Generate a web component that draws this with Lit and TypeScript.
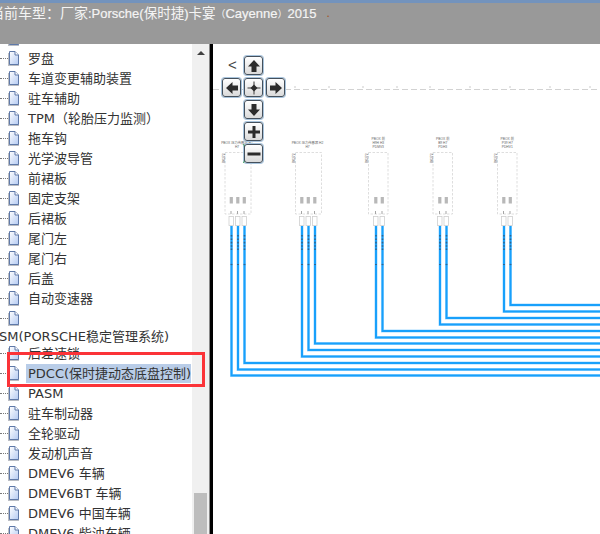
import { LitElement, html, css, svg } from "lit";
import { customElement } from "lit/decorators.js";

const tpm = html`TPM<span class="tc">（</span>轮胎压力监测<span class="tc">）</span>`;
const rowsA: unknown[] = ["", "罗盘", "车道变更辅助装置", "驻车辅助", tpm, "拖车钩", "光学波导管", "前裙板", "固定支架", "后裙板", "尾门左", "尾门右", "后盖", "自动变速器", ""];
const rowsB: unknown[] = ["后差速锁", "PDCC(保时捷动态底盘控制)", "PASM", "驻车制动器", "全轮驱动", "发动机声音", "DMEV6 车辆", "DMEV6BT 车辆", "DMEV6 中国车辆", "DMEV6 柴油车辆"];

const fileIcon = html`<svg class="file" viewBox="0 0 12 16" width="12" height="16">
  <defs><linearGradient id="pg" x1="0" y1="0" x2="1" y2="1"><stop offset="0" stop-color="#ffffff"/><stop offset="1" stop-color="#b4caf2"/></linearGradient></defs>
  <path d="M0 3h7l4 3.500V16H0z" fill="#a3a7af" opacity=".75"/>
  <path d="M1.500 1.500h5.500l3.500 3.500v9.500h-9z" fill="url(#pg)" stroke="#5f79a8"/>
  <path d="M7 1.500v3.500h3.500" fill="#fff" stroke="#5f79a8"/>
</svg>`;

const wires: [number, number][] = [
  [231.5, 375.5], [238, 369.5], [244.5, 363],
  [302, 356.5], [308.5, 350], [315, 343.5],
  [376, 337.5], [382.5, 331],
  [440, 324.5], [446.5, 318],
  [504, 311.5], [510.5, 305],
];
const boxes = [
  { x: 225, w: 26, label: ["PBOX 压力传感器 H1", "H7"], y: 144, pins: [231.5, 238, 244.5] },
  { x: 295.5, w: 26, label: ["PBOX 压力传感器 H2", "H7"], y: 144, pins: [302, 308.5, 315] },
  { x: 368.5, w: 19.5, label: ["PBOX 前", "H9H H3", "PDMV3"], y: 139.5, pins: [376, 382.5] },
  { x: 433, w: 19.5, label: ["PBOX 前", "B9 H7", "PDH3"], y: 139.5, pins: [440, 446.5] },
  { x: 497.5, w: 19.5, label: ["PBOX 前", "P39 H7", "PDHV1"], y: 139.5, pins: [504, 510.5] },
];

function diagram() {
  const ticks = [295, 329, 363, 397, 430, 470, 510, 550, 590];
  return svg`<svg class="diagram" viewBox="213 44 387 490" width="387" height="490">
    <line x1="213" x2="600" y1="89.5" y2="89.5" stroke="#d2d2d2" stroke-width="1" stroke-dasharray="6 3"/>
    ${ticks.map((t) => svg`<line x1=${t} x2=${t} y1="86" y2="88" stroke="#b5b5b5" stroke-width=".7"/>`)}
    ${boxes.map((b) => svg`
      <rect x=${b.x} y="152.5" width=${b.w} height="61.5" fill="#fff" stroke="#d6d6d6" stroke-width=".8" stroke-dasharray="2.5 1.5"/>
      <text class="tiny" x=${b.x - 0.5} y="163" transform="rotate(-90 ${b.x - 0.5} 163)">B0372</text>
      ${b.label.map((l, i) => svg`<text class="tiny" x=${b.x + b.w / 2 - (b.w > 20 ? 1 : 0)} y=${b.y + i * 4.1} text-anchor="middle">${l}</text>`)}
      ${b.pins.map((p) => svg`
        <rect x=${p - 1.8} y="197" width="3.2" height="6.5" fill="#9a9a9a" opacity=".7"/>
        <rect x=${p - 2.5} y="216.5" width="4.5" height="9" fill="#fff" stroke="#cfcfcf" stroke-width=".8"/>
        <line x1=${p - .5} x2=${p - .5} y1="211" y2="214" stroke="#a5a5a5" stroke-width="1"/>
      `)}
    `)}
    ${wires.map(([x, y]) => svg`
      <path d="M${x} 226V${y}H600" fill="none" stroke="#a8dcff" stroke-width="3"/>
      <path d="M${x} 226V${y}H600" fill="none" stroke="#18a0fb" stroke-width="2"/>
      <path d="M${x} 235V250" fill="none" stroke="#33506e" stroke-width="1.6" stroke-dasharray="1.6 1.8" opacity=".75"/>
      <line x1=${x - 1} x2=${x + 1} y1="264.5" y2="264.5" stroke="#33506e" stroke-width="1.2" opacity=".7"/>
    `)}
  </svg>`;
}

const arrow = (d: string) => svg`<svg class="glyph" viewBox="0 0 16 16" width="16" height="16"><path d=${d} fill="#2c2c2c"/></svg>`;
const centerIcon = svg`<svg class="glyph" viewBox="0 0 16 16" width="16" height="16">
  <path d="M8 1.5V14.5M1.5 8H14.5" stroke="#777" stroke-width="1.5" fill="none"/>
  <path d="M8 4.500 11.500 8 8 11.500 4.500 8z" fill="#2c2c2c"/>
</svg>`;
const ICONS = {
  up: "M8 2 14 8.500H10.500V14H5.500V8.500H2z",
  down: "M8 14 14 7.500H10.500V2H5.500V7.500H2z",
  left: "M2 8 8.500 2V5.500H14V10.500H8.500V14z",
  right: "M14 8 7.500 2V5.500H2V10.500H7.500V14z",
  plus: "M6.500 2h3v4.500h4.500v3H9.500v4.500h-3V9.500H2v-3h4.500z",
  minus: "M1.500 6.500h13v3h-13z",
};

@customElement("app-root")
export class AppRoot extends LitElement {
  static styles = css`
    :host { display: block; width: 600px; height: 534px; overflow: hidden; position: relative; background: #fff;
      font-family: "DejaVu Sans", "Noto Sans CJK SC", sans-serif; text-spacing-trim: space-all; }
    .header { height: 44px; box-sizing: border-box; background: #999; border-top: 3px solid #7393bd; overflow: hidden; white-space: nowrap;
      color: #f4f4f4; font: 14px/20px "Liberation Sans", "Noto Sans CJK SC", sans-serif; display: flex; text-spacing-trim: space-all; }
    .title { margin-left: -10px; }
    .lat { font-size: 13px; -webkit-text-stroke: 0.2px #f4f4f4; }
    .cjk { font-size: 13.5px; }
    .po { font-family: "Noto Sans CJK TC", sans-serif; font-size: 10px; }
    .pc { font-size: 10px; }
    .dot { color: #a5521c; margin-left: 10px; font-size: 12px; }
    .main { display: flex; height: 490px; }
    .tree { width: 192px; flex: none; overflow: hidden; font-size: 13px; color: #333; }
    .tc { font-family: "Noto Sans CJK TC", sans-serif; }
    .row { height: 20px; display: flex; align-items: center; white-space: nowrap; position: relative; }
    .row.clip { margin-top: -16px; }
    .leader { width: 8px; flex: none; border-top: 1px dotted #777; }
    .file { flex: none; margin-right: 6px; }
    .label { padding: 0 2px; line-height: 19px; }
    .row.sel .label { background: #b9cde8; width: 165px; box-sizing: border-box; flex: none; }
    .group { height: 17px; line-height: 17px; background: #fff; position: relative; z-index: 1; margin-left: -1px; white-space: nowrap; }
    .after { margin-top: -2px; }
    .scroll { width: 17px; flex: none; background: #f0f0f0; display: flex; flex-direction: column; justify-content: space-between; align-items: center; }
    .scroll .up { width: 0; height: 0; border: 4px solid transparent; border-top: 0; border-bottom: 4px solid #404040; margin-top: 7px; }
    .scroll .thumb { width: 13px; height: 41px; background: #bdbdbd; }
    .divider { width: 4px; flex: none; background: linear-gradient(90deg, #888 0 1px, #000 1px 4px); }
    .canvas { flex: 1; position: relative; overflow: hidden; background: #fff; }
    .diagram { position: absolute; left: 0; top: 0; display: block; }
    .tiny { font: 3.3px "Liberation Sans", "Noto Sans CJK SC", sans-serif; fill: #666; }
    .lt { position: absolute; left: 15px; top: 11px; font: 15px/20px "Liberation Sans", sans-serif; color: #444; }
    .btn { position: absolute; width: 19px; height: 19px; box-sizing: border-box; background: linear-gradient(#fff, #dadada); border: 1px solid #44505c; border-radius: 3px;
      box-shadow: 0 0 0 1px #a9c4dc; display: flex; align-items: center; justify-content: center; }
    .btn svg { display: block; }
    .green { position: absolute; left: 30px; top: 100px; width: 2px; height: 19px; background: #3da843; }
    .mark { position: absolute; left: 7px; top: 352px; width: 198px; height: 35px; box-sizing: border-box; border: 3px solid #fb3338; }
  `;

  private row(text: unknown, cls = "") {
    return html`<div class="row ${cls}"><span class="leader"></span>${fileIcon}${text ? html`<span class="label">${text}</span>` : ""}</div>`;
  }

  private btn(x: number, y: number, d: string) {
    return html`<div class="btn" style="left:${x}px;top:${y}px">${arrow(d)}</div>`;
  }

  render() {
    return html`
      <div class="header"><span class="title">当前车型：厂家<span class="lat">:Porsche(</span><span class="cjk">保时捷</span><span class="lat">)</span><span class="cjk">卡宴</span><span class="po">（</span><span class="lat">Cayenne</span><span class="pc">）</span><span class="lat">2015</span></span><span class="dot">.</span></div>
      <div class="main">
        <div class="tree">
          ${rowsA.map((t, i) => this.row(t, i === 0 ? "clip" : ""))}
          <div class="group">SM(PORSCHE稳定管理系统)</div>
          ${rowsB.map((t, i) => this.row(t, i === 0 ? "after" : i === 1 ? "sel" : ""))}
        </div>
        <div class="scroll"><span class="up"></span><span class="thumb"></span></div>
        <div class="divider"></div>
        <div class="canvas">
          ${diagram()}
          <span class="lt">&lt;</span>
          ${this.btn(31, 12, ICONS.up)}
          ${this.btn(9, 34, ICONS.left)}
          <div class="btn" style="left:31px;top:34px">${centerIcon}</div>
          ${this.btn(53, 34, ICONS.right)}
          ${this.btn(31, 56, ICONS.down)}
          ${this.btn(31, 78, ICONS.plus)}
          <span class="green"></span>
          ${this.btn(31, 100, ICONS.minus)}
        </div>
      </div>
      <div class="mark"></div>
    `;
  }
}
